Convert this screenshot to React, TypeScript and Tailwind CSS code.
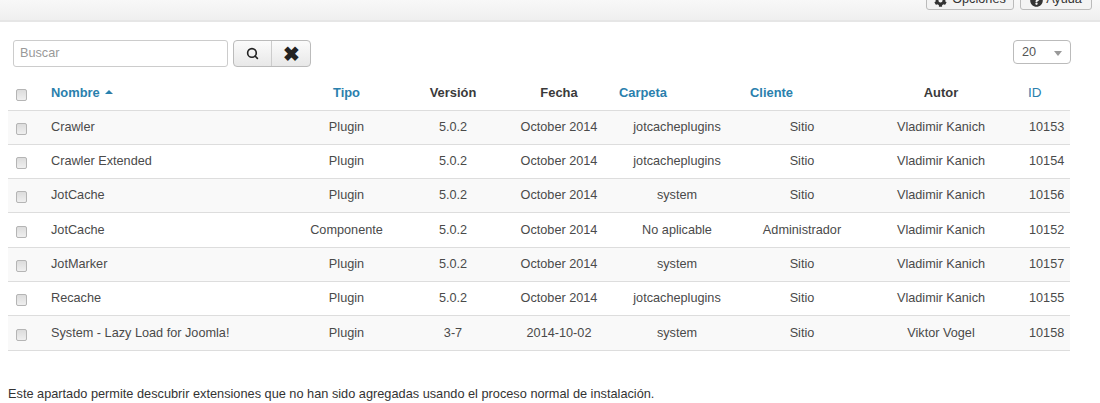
import { Search } from "lucide-react";
import { FaCog, FaQuestionCircle } from "react-icons/fa";

const rows = [
  ["Crawler", "Plugin", "5.0.2", "October 2014", "jotcacheplugins", "Sitio", "Vladimir Kanich", "10153"],
  ["Crawler Extended", "Plugin", "5.0.2", "October 2014", "jotcacheplugins", "Sitio", "Vladimir Kanich", "10154"],
  ["JotCache", "Plugin", "5.0.2", "October 2014", "system", "Sitio", "Vladimir Kanich", "10156"],
  ["JotCache", "Componente", "5.0.2", "October 2014", "No aplicable", "Administrador", "Vladimir Kanich", "10152"],
  ["JotMarker", "Plugin", "5.0.2", "October 2014", "system", "Sitio", "Vladimir Kanich", "10157"],
  ["Recache", "Plugin", "5.0.2", "October 2014", "jotcacheplugins", "Sitio", "Vladimir Kanich", "10155"],
  ["System - Lazy Load for Joomla!", "Plugin", "3-7", "2014-10-02", "system", "Sitio", "Viktor Vogel", "10158"],
];

function Box() {
  return (
    <span className="block w-[11px] h-[12px] rounded-[2px] border border-[#b5b5b5] bg-gradient-to-b from-[#dcdcdc] to-[#efefef]" />
  );
}

export default function App() {
  return (
    <div className="w-[1100px] h-[403px] overflow-hidden bg-white text-[12.7px] text-[#4a4a4a] font-['Liberation_Sans',Arial,sans-serif]">
      <div className="h-[22px] border-b-2 border-[#e6e6e6] bg-gradient-to-b from-[#f8f8f8] to-[#efefef] flex items-end justify-end gap-[6px] pr-[8px] pb-[10px] overflow-hidden">
        <div className="h-[26px] w-[88px] shrink-0 flex items-center justify-center gap-[5px] pt-[6px] rounded-[3px] border border-[#bbb] bg-[#f3f3f3] text-[#333]">
          <FaCog size={13} />
          <span>Opciones</span>
        </div>
        <div className="h-[26px] w-[72px] shrink-0 flex items-center justify-center gap-[3px] pt-[6px] rounded-[3px] border border-[#bbb] bg-[#f3f3f3] text-[#333]">
          <FaQuestionCircle size={13} />
          <span>Ayuda</span>
        </div>
      </div>
      <div className="flex items-start pl-[13px] pr-[29px] pt-[18px] h-[46px]">
        <div className="w-[215px] h-[27px] rounded-[3px] border border-[#ccc] flex items-center px-[6px] text-[#999]">Buscar</div>
        <div className="ml-[5px] flex h-[27px] rounded-[4px] border border-[#bbb] bg-gradient-to-b from-[#fbfbfb] to-[#e8e8e8]">
          <span className="w-[38px] flex items-center justify-center border-r border-[#ccc] text-[#222]">
            <Search size={13} strokeWidth={3} />
          </span>
          <span className="w-[38px] flex items-center justify-center text-[#222] text-[20px] font-bold leading-none">
            ✖
          </span>
        </div>
        <div className="ml-auto w-[58px] h-[24px] rounded-[4px] border border-[#bbb] flex items-center justify-between pl-[8px] pr-[8px] pt-[2px] text-[#555]">
          <span>20</span>
          <span className="w-0 h-0 border-x-[4px] border-x-transparent border-t-[5px] border-t-[#999]" />
        </div>
      </div>
      <table className="ml-[8px] mt-[5px] w-[1062px] table-fixed border-collapse">
        <colgroup>
          <col className="w-[35px]" />
          <col className="w-[250px]" />
          <col className="w-[107px]" />
          <col className="w-[106px]" />
          <col className="w-[106px]" />
          <col className="w-[130px]" />
          <col className="w-[120px]" />
          <col className="w-[158px]" />
          <col className="w-[50px]" />
        </colgroup>
        <thead>
          <tr className="h-[37px] border-b border-[#ddd] font-bold text-[12.9px]">
            <td className="pl-[8px] pt-[7px]"><Box /></td>
            <td className="pl-[8px] pt-[3px] text-[#2a80ad]">
              Nombre <span className="inline-block ml-[2px] mb-[3px] w-0 h-0 border-x-[4px] border-x-transparent border-b-[4px] border-b-[#2a80ad]" />
            </td>
            <td className="pt-[3px] text-center text-[#2a80ad]">Tipo</td>
            <td className="pt-[3px] text-center text-[#3a3a3a]">Versión</td>
            <td className="pt-[3px] text-center text-[#3a3a3a]">Fecha</td>
            <td className="pl-[7px] pt-[3px] text-[#2a80ad]">Carpeta</td>
            <td className="pl-[8px] pt-[3px] text-[#2a80ad]">Cliente</td>
            <td className="pt-[3px] text-center text-[#3a3a3a]">Autor</td>
            <td className="pl-[8px] pt-[3px] text-[#2a80ad] font-normal text-[13.5px]">ID</td>
          </tr>
        </thead>
        <tbody>
          {rows.map((r, i) => (
            <tr key={i} className={`h-[34.33px] border-b border-[#ddd] ${i % 2 === 0 ? "bg-[#f9f9f9]" : "bg-white"}`}>
              <td className="pl-[8px] pt-[3px]"><Box /></td>
              <td className="pl-[8px]">{r[0]}</td>
              <td className="text-center">{r[1]}</td>
              <td className="text-center">{r[2]}</td>
              <td className="text-center">{r[3]}</td>
              <td className="text-center">{r[4]}</td>
              <td className="text-center">{r[5]}</td>
              <td className="text-center">{r[6]}</td>
              <td className="pl-[9px]">{r[7]}</td>
            </tr>
          ))}
        </tbody>
      </table>
      <p className="ml-[8px] mt-[33px] text-[12.76px] text-[#333]">
        Este apartado permite descubrir extensiones que no han sido agregadas usando el proceso normal de instalación.
      </p>
    </div>
  );
}
